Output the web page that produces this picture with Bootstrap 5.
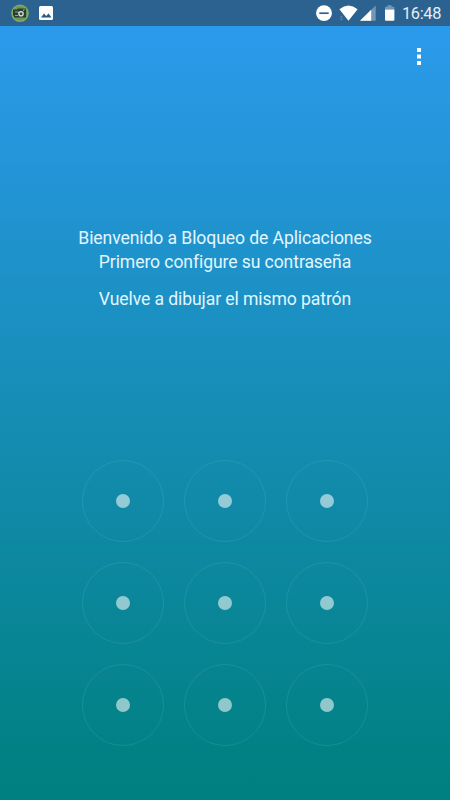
<!DOCTYPE html>
<html lang="es">
<head>
<meta charset="utf-8">
<meta name="viewport" content="width=device-width, initial-scale=1">
<title>Bloqueo de Aplicaciones</title>
<link href="https://cdn.jsdelivr.net/npm/bootstrap@5.3.0/dist/css/bootstrap.min.css" rel="stylesheet">
<style>
body { font-family: Roboto, sans-serif; background: #008080; }
.screen { height: 800px; width: 450px; background: linear-gradient(#2d9bef, #008080 98%); }
.status { height: 26px; background: #2b628f; padding: 0 9px 0 11px; }
.clock { font-size: 16.4px; letter-spacing: -.35px; line-height: 26px; padding-top: 1px; color: #e4eef5; width: 39px; white-space: nowrap; }
.toolbar { height: 61px; padding-right: 22px; }
.overflow { background: none; }
.welcome { margin-top: 139px; font-size: 17.6px; letter-spacing: -.1px; line-height: 24px; color: #e1f7ff; }
.welcome p { margin-bottom: 13px; }
.pattern { display: grid; grid-template-columns: repeat(3, 82px); gap: 20px; width: 286px; margin: 136px 0 0 82px; }
.node { width: 82px; height: 82px; border: 1px solid rgba(150, 225, 235, .13); }
.node span { width: 14px; height: 14px; background: rgba(222, 240, 240, .64); }
</style>
</head>
<body>
<main class="screen d-flex flex-column overflow-hidden">
  <header class="status d-flex justify-content-between align-items-center flex-shrink-0">
    <svg width="44" height="26" viewBox="11 0 44 26" aria-hidden="true">
      <circle cx="20" cy="13.2" r="8.8" fill="#7fab5c"/>
      <circle cx="20" cy="13.2" r="7.2" fill="#6f9558"/>
      <path d="M13 9.5h4l1-1h8v9H14v-2h-1z" fill="#283d36"/>
      <path d="M15 12h4M15 15.5h3" stroke="#89a985" stroke-width="1"/>
      <circle cx="21" cy="13.8" r="2.8" fill="#dce6dc"/>
      <circle cx="21" cy="13.8" r="1.5" fill="#354a43"/>
      <path d="M23 10.5l1.5-1" stroke="#cddccc"/>
      <rect x="39" y="6" width="14" height="14" rx="1.5" fill="#fff"/>
      <path d="M41 17.5l3-4 2.2 2.6 2.3-2.6 3 4z" fill="#2b5a80"/>
    </svg>
    <div class="d-flex align-items-center">
      <svg width="87" height="26" viewBox="315 0 87 26" aria-hidden="true">
        <circle cx="324" cy="13.2" r="7.9" fill="#fff"/>
        <path d="M319.3 13.2h9.4" stroke="#2b628f" stroke-width="1.7"/>
        <path d="M339.4 9.2Q348.4 2 357.6 9.2L348.5 20.8z" fill="#fff"/>
        <path d="M340 17.4l1.4-1.7 1.4 1.7zM340 18.8l1.4 1.7 1.4-1.7z" fill="#6c91b1"/>
        <path d="M360 20.8L375.7 5.5v15.3z" fill="#7497b5"/>
        <path d="M360 20.8L371.2 9.8v11z" fill="#fff"/>
        <path d="M385 9.5V7.6q0-.9 1-.9h1.4V5.2h4.2v1.5h1.8q1 0 1 .9v1.9z" fill="#7497b5"/>
        <path d="M385 9.4h9.4v10.3q0 1-1 1H386q-1 0-1-1z" fill="#fff"/>
      </svg>
      <time class="clock">16:48</time>
    </div>
  </header>
  <nav class="toolbar d-flex justify-content-end align-items-center flex-shrink-0">
    <button class="overflow border-0 p-0 d-flex" aria-label="Más opciones">
      <svg width="18" height="20" viewBox="0 0 18 20" fill="#fff"><path d="M7 1h4v4H7zM7 7.5h4v4H7zM7 14h4v4H7z"/></svg>
    </button>
  </nav>
  <section class="welcome text-center">
    <p>Bienvenido a Bloqueo de Aplicaciones<br>Primero configure su contraseña</p>
    <p>Vuelve a dibujar el mismo patrón</p>
  </section>
  <section class="pattern" aria-label="Patrón">
    <div class="node rounded-circle d-flex align-items-center justify-content-center"><span class="rounded-circle"></span></div>
    <div class="node rounded-circle d-flex align-items-center justify-content-center"><span class="rounded-circle"></span></div>
    <div class="node rounded-circle d-flex align-items-center justify-content-center"><span class="rounded-circle"></span></div>
    <div class="node rounded-circle d-flex align-items-center justify-content-center"><span class="rounded-circle"></span></div>
    <div class="node rounded-circle d-flex align-items-center justify-content-center"><span class="rounded-circle"></span></div>
    <div class="node rounded-circle d-flex align-items-center justify-content-center"><span class="rounded-circle"></span></div>
    <div class="node rounded-circle d-flex align-items-center justify-content-center"><span class="rounded-circle"></span></div>
    <div class="node rounded-circle d-flex align-items-center justify-content-center"><span class="rounded-circle"></span></div>
    <div class="node rounded-circle d-flex align-items-center justify-content-center"><span class="rounded-circle"></span></div>
  </section>
</main>
<script src="https://cdn.jsdelivr.net/npm/bootstrap@5.3.0/dist/js/bootstrap.bundle.min.js"></script>
</body>
</html>
